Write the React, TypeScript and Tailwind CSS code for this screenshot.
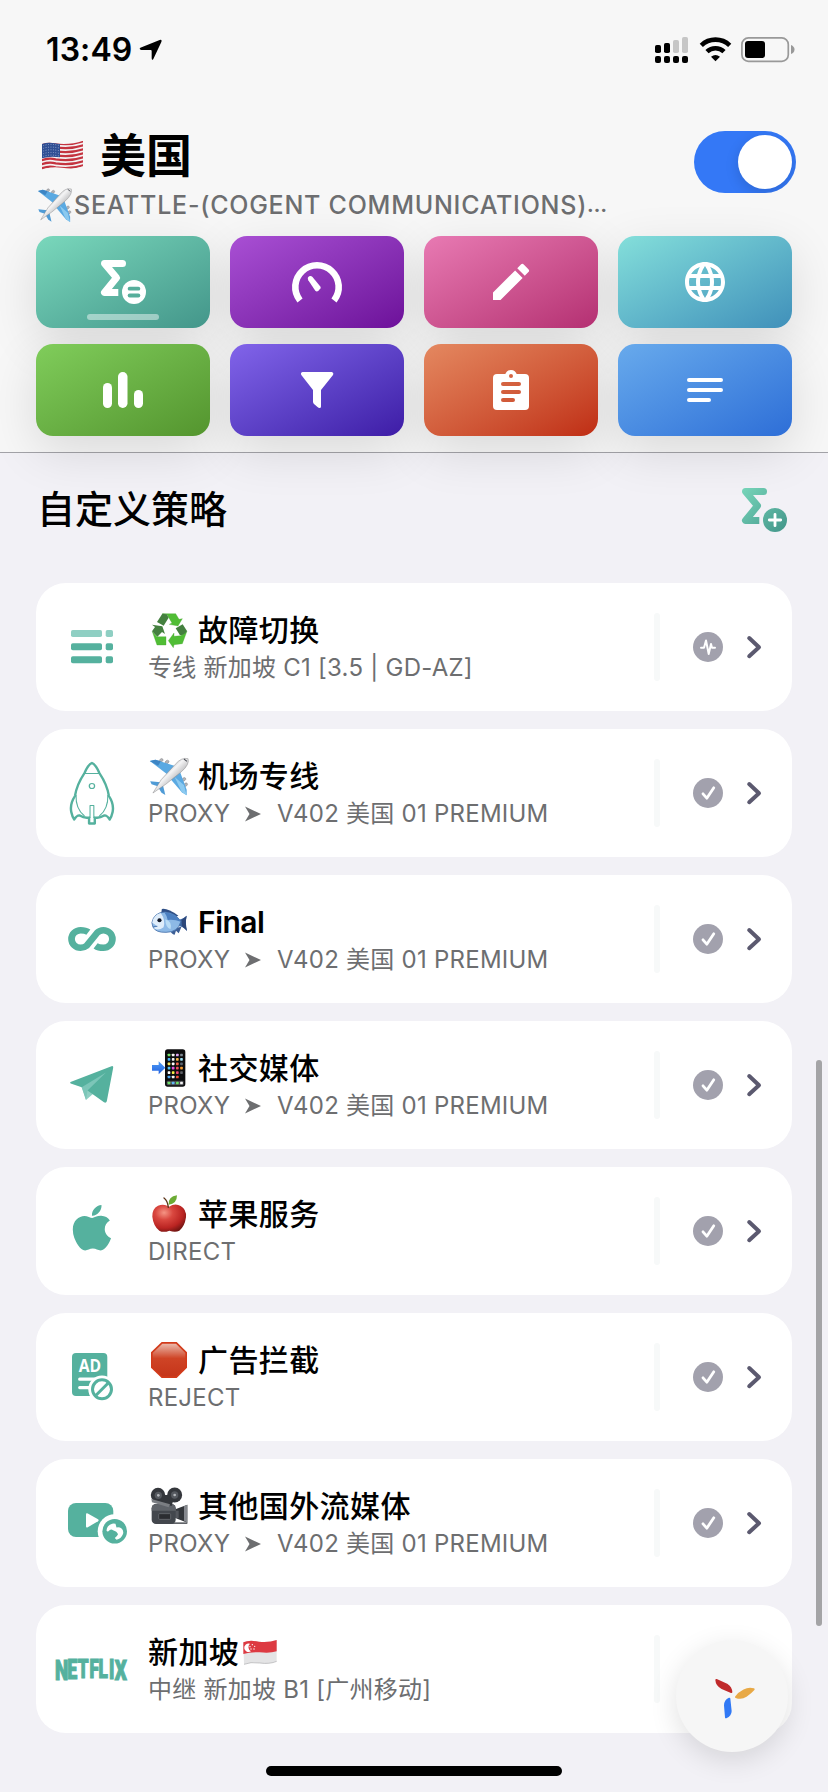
import type { ReactNode } from "react";
import { MdEdit, MdLanguage } from "react-icons/md";
import { FaApple } from "react-icons/fa";

const GREEN = "#55b19e";

/* ---------- status bar ---------- */

function StatusBar() {
  return (
    <div className="flex h-[98px] items-start justify-between pl-[46px] pr-[33px] pt-[30px]">
      <div className="flex h-[39px] items-center">
        <span className="w-[93px] whitespace-nowrap text-[32px] font-semibold leading-none tracking-[0.1px] text-black">13:49</span>
        <svg className="h-[24px] w-[24px]" viewBox="414 114 72 72">
          <path d="M418 143 L476 120 Q484 118 481 126 L457 177 Q453 183 452 175 V153 Q452 150 449 150 L421 150 Q413 147 418 143Z" fill="#000" />
        </svg>
      </div>
      <svg className="h-[39px] w-[141px]" viewBox="654 30 141 39">
        <rect x="655" y="45" width="6" height="8" rx="1.8" />
        <rect x="664" y="43" width="6" height="10" rx="1.8" />
        <rect x="673" y="40" width="6" height="13" rx="1.8" fill="#c6c6c6" />
        <rect x="682" y="37" width="6" height="16" rx="1.8" fill="#c6c6c6" />
        <rect x="655" y="56" width="6" height="7" rx="2" />
        <rect x="664" y="56" width="6" height="7" rx="2" />
        <rect x="673" y="56" width="6" height="7" rx="2" />
        <rect x="682" y="56" width="6" height="7" rx="2" />
        <g fill="none" stroke="#000" strokeWidth="4.6">
          <path d="M701.3 45.3 A20.5 20.5 0 0 1 729.7 45.3" />
          <path d="M707 51.6 A12.3 12.3 0 0 1 724 51.6" />
        </g>
        <path d="M711 56.8 Q715.5 53 720 56.8 L715.5 61.3Z" />
        <rect x="741.9" y="37.9" width="46.4" height="23.4" rx="6.5" fill="none" stroke="#999" strokeWidth="1.7" />
        <rect x="745" y="41" width="20" height="17" rx="3" />
        <path d="M791 45 Q794.5 46.5 794.5 49.5 Q794.5 52.5 791 54Z" fill="#999" />
      </svg>
    </div>
  );
}

/* ---------- emoji drawings (50x40 slots) ---------- */

function Emoji({ box, children }: { box: string; children: ReactNode }) {
  return (
    <svg className="h-[40px] w-[50px] shrink-0" viewBox={box} preserveAspectRatio="none">
      {children}
    </svg>
  );
}

function PlaneShape() {
  return (
    <g>
      <defs>
        <linearGradient id="fus" x1="0" y1="0" x2="1" y2="1">
          <stop offset="0.25" stopColor="#9a9a9c" />
          <stop offset="0.45" stopColor="#f4f4f5" />
          <stop offset="0.8" stopColor="#8b8b8e" />
        </linearGradient>
      </defs>
      <g fill="#b3b4b8" stroke="#85868b" strokeWidth="1.5">
        <ellipse cx="381" cy="118" rx="6" ry="4.5" transform="rotate(-40 381 118)" />
        <ellipse cx="398" cy="123" rx="6" ry="4.5" transform="rotate(-40 398 123)" />
        <ellipse cx="447" cy="175" rx="6" ry="4.5" transform="rotate(-40 447 175)" />
        <ellipse cx="452" cy="191" rx="6" ry="4.5" transform="rotate(-40 452 191)" />
      </g>
      <path d="M348 120 L364 116 L430 138 L404 164Z" fill="#5aa9e2" />
      <path d="M348 120 L364 116 L380 121 L372 134Z" fill="#3d85c4" />
      <path d="M434 148 L455 206 V223 L441 214 L406 172Z" fill="#5aa9e2" />
      <path d="M420 168 L447 192 L455 223 L441 214Z" fill="#8ccaf0" />
      <path d="M349 181 L379 184 L371 196 L353 190Z" fill="#4f9bd6" />
      <path d="M386 192 L393 222 L382 215 L373 200Z" fill="#4f9bd6" />
      <path d="M459 113 Q440 108 422 130 L381 176 L357 216 L394 190 L440 152 Q464 130 459 113Z" fill="url(#fus)" stroke="#88888b" strokeWidth="1.5" />
      <path d="M447 114 L456 121" stroke="#4a4d55" strokeWidth="3" />
    </g>
  );
}

function Recycle() {
  return (
    <Emoji box="384 450 150 120">
      <g fill="#50bd35" strokeLinejoin="round" strokeWidth="1" stroke="#46a832">
        <path d="M427 461 H467 L477 478 L487 476 L474 498 L448 493 L456 489 L441 464Z" />
        <path d="M462 519 V529 L482 527 L501 513 L487 551 L462 554 L460 563 L445 542Z" />
        <path d="M397 515 L411 530 H438 V555 H411Z" />
      </g>
      <g fill="#44803f">
        <path d="M427 461 L440 463 L446 473 L431 497 L411 486Z" />
        <path d="M467 505 L488 493 L501 513 Q494 525 480 526Z" />
        <path d="M396 494 L427 499 L435 522 L426 516 L412 530 L396 514 L405 501Z" />
      </g>
    </Emoji>
  );
}

function Fish() {
  return (
    <Emoji box="342.7 182 145.2 120">
      <g transform="translate(0 -364)">
        <path d="M383 567 Q398 563 431 587 L400 600 L380 585Z" fill="#2f4f86" />
        <path d="M405 628 Q412 645 420 644 L424 632 L432 640 L440 620Z" fill="#3d5f96" />
        <path d="M424 600 Q440 600 455 587 Q450 610 456 633 Q444 618 428 618Z" fill="#3f6ba8" />
        <path d="M440 600 L455 587 Q450 610 456 633 L441 618Z" fill="#2c477a" />
        <path d="M354 608 Q360 577 392 576 Q425 580 438 605 Q430 637 395 637 Q365 638 357 621Z" fill="#8db9e6" stroke="#4671ab" strokeWidth="2.5" />
        <path d="M390 577 Q425 580 438 605 Q420 598 400 600 Q398 588 390 577Z" fill="#4b7fc0" />
        <path d="M355 608 Q358 585 380 579 Q394 600 388 622 Q372 634 359 624 L370 619Z" fill="#dfedfa" />
        <path d="M393 598 Q414 605 408 628 Q393 622 393 598Z" fill="#b9dcf5" />
        <circle cx="376" cy="601" r="6" fill="#101828" />
        <path d="M358 620 L370 619" stroke="#4671ab" strokeWidth="2.5" />
      </g>
    </Emoji>
  );
}

const APP_COLORS = [
  "#79e36b", "#f4f4f4", "#e0a5f5", "#7d8790", "#49b3f5", "#f2f2f2", "#f5b64b", "#9be0f5",
  "#f7e75b", "#ffffff", "#f2634b", "#5b6470", "#52c3f7", "#e64fe0", "#ef4f5f", "#f59a2f",
  "#ffffff", "#f5ee45", "#ee4b7a", "#5d5f66", "#4ea9f5", "#f4f4f4", "#f0503c", "#111111",
];

function Phone() {
  return (
    <Emoji box="354 38 150 120">
      <defs>
        <linearGradient id="arr" x1="0" y1="0" x2="0" y2="1">
          <stop stopColor="#4f9df5" />
          <stop offset="1" stopColor="#2160e0" />
        </linearGradient>
      </defs>
      <g transform="translate(0 -76)">
        <rect x="405" y="118" width="61" height="112" rx="8" fill="#0c0c0e" />
        <path d="M366 165 H386 V154 L406 173.5 L386 193 V182 H366Z" fill="url(#arr)" />
        {APP_COLORS.map((c, i) => (
          <rect key={i} x={413 + (i % 4) * 12.5} y={131 + Math.floor(i / 4) * 13.2} width="8" height="8" rx="2" fill={c} />
        ))}
        <rect x="410" y="212" width="51" height="14" rx="3" fill="#4a4b50" />
        {["#6fe06a", "#5fb9f5", "#6ade66", "#f4f4f4"].map((c, i) => (
          <rect key={c} x={413 + i * 12.5} y="215" width="8" height="8" rx="2" fill={c} />
        ))}
      </g>
    </Emoji>
  );
}

function AppleFruit() {
  return (
    <Emoji box="354 552 150 120">
      <defs>
        <radialGradient id="red" cx="0.35" cy="0.3" r="0.75">
          <stop stopColor="#f59484" />
          <stop offset="0.35" stopColor="#d9473f" />
          <stop offset="0.75" stopColor="#ba2422" />
          <stop offset="1" stopColor="#751613" />
        </radialGradient>
      </defs>
      <path d="M417 590 Q436 578 452 588 Q470 598 468 622 Q464 650 448 662 Q436 668 418 662 Q400 669 388 662 Q370 648 367 620 Q366 596 384 587 Q402 580 417 590Z" fill="url(#red)" />
      <path d="M402 564 Q413 572 415 592" fill="none" stroke="#5a3216" strokeWidth="4" strokeLinecap="round" />
      <path d="M416 584 Q414 560 441 556 Q441 582 416 584Z" fill="#6cab34" />
    </Emoji>
  );
}

function StopSign() {
  return (
    <Emoji box="354 120 150 120">
      <defs>
        <linearGradient id="stop" x1="0" y1="0" x2="0" y2="1">
          <stop stopColor="#eab9ab" />
          <stop offset="0.45" stopColor="#cf4426" />
          <stop offset="1" stopColor="#c5351a" />
        </linearGradient>
      </defs>
      <path d="M395 126 H440 L471 157 V203 L440 234 H395 L363 203 V157Z" fill="#d23a1a" />
      <path d="M397 131 H438 L466 159 V201 L438 229 H397 L368 201 V159Z" fill="url(#stop)" />
    </Emoji>
  );
}

function Camera() {
  return (
    <Emoji box="354 558 150 120">
      <path d="M436 628 L472 614 V668 L436 654Z" fill="#33363b" />
      <path d="M462 619 L472 614 V668 L462 662Z" fill="#85888e" />
      <path d="M432 632 h14 v22 h-14Z" fill="#54575d" />
      <rect x="424" y="667" width="48" height="5" fill="#606368" />
      <rect x="365" y="612" width="72" height="60" rx="13" fill="#43474d" />
      <path d="M365 626 Q365 612 380 612 H425 Q437 613 437 626 V632 H365Z" fill="#5f6369" />
      <rect x="386" y="641" width="36" height="17" rx="3" fill="#2b2d31" stroke="#74777c" strokeWidth="2" />
      <path d="M384 585 L434 585 L425 618 L380 606Z" fill="#34373c" />
      <circle cx="384" cy="585" r="21.5" fill="#34373c" />
      <circle cx="434" cy="585" r="22.5" fill="#34373c" />
      <path d="M364 597 L420 613 L416 622 L366 607Z" fill="#7b7e83" />
      <circle cx="385" cy="586" r="11" fill="#565a60" />
      <circle cx="434" cy="585" r="11" fill="#565a60" />
      <circle cx="385" cy="586" r="4" fill="#b4b7bb" />
      <circle cx="434" cy="585" r="4" fill="#b4b7bb" />
    </Emoji>
  );
}

function SingaporeFlag() {
  return (
    <Emoji box="630 126 150 120">
      <g transform="translate(0 -87)">
        <path d="M643 244 Q660 236 690 242 Q720 245 743 237 V301 Q722 310 692 306 Q664 302 645 310Z" fill="#e4e4e5" />
        <path d="M643 244 Q660 236 690 242 Q720 245 743 237 V271 Q722 278 692 274 Q664 272 643 279Z" fill="#dd3a42" />
        <path d="M645 310 Q664 302 692 306 Q722 310 743 301" fill="none" stroke="#a9a9ac" strokeWidth="2" />
        <path d="M663 248 A13 13 0 1 0 666 271 A14 14 0 0 1 663 248Z" fill="#fff" />
        {[[670, 251], [677, 256], [675, 264], [666, 264], [663, 257]].map(([x, y]) => (
          <circle key={x} cx={x} cy={y} r="2" fill="#fff" />
        ))}
      </g>
    </Emoji>
  );
}

function UsFlag() {
  return (
    <svg className="h-[36px] w-[62px] shrink-0" viewBox="114 408 186 108">
      <defs>
        <clipPath id="us">
          <path d="M126 429 Q145 422 165 427 Q210 433 249 419 V496 Q225 506 185 500 Q150 495 126 507Z" />
        </clipPath>
      </defs>
      <g clipPath="url(#us)">
        <rect x="120" y="410" width="135" height="100" fill="#f4f2f3" />
        {[0, 1, 2, 3, 4, 5, 6].map((i) => (
          <path key={i} d={`M122 ${430 + i * 12.2} Q145 ${421 + i * 12} 167 ${427 + i * 12} Q212 ${434 + i * 12} 252 ${420 + i * 12}`} fill="none" stroke="#c4333f" strokeWidth="6.5" />
        ))}
        <path d="M126 427 Q145 420 165 426 L180 428 V469 Q150 464 126 472Z" fill="#2f4f94" />
        {[0, 1, 2, 3, 4].map((r) => (
          <path key={r} d={`M130 ${434 + r * 8} Q150 ${427 + r * 8} 177 ${433 + r * 8}`} fill="none" stroke="#bcc8e4" strokeWidth="2.4" strokeDasharray="2.4 5" />
        ))}
      </g>
    </svg>
  );
}

/* ---------- header tiles ---------- */

function TileIcon({ children }: { children: ReactNode }) {
  return (
    <svg className="h-[92px] w-[174px]" viewBox="0 0 174 92" fill="#fff">
      {children}
    </svg>
  );
}

function Sigma({ stroke }: { stroke: string }) {
  return (
    <g fill="none" stroke={stroke} strokeWidth="7" strokeLinejoin="round">
      <path d="M86.5 27.5 H68.5 L80.5 41.8 L68.5 56.5 H82.3" />
      <path d="M80 27.5 H86.5" strokeLinecap="round" />
    </g>
  );
}

const tiles: { bg: string; icon: ReactNode }[] = [
  {
    bg: "from-[#7ad8bc] to-[#43968a]",
    icon: (
      <TileIcon>
        <Sigma stroke="#fff" />
        <circle cx="98" cy="56" r="12" />
        <rect x="91.7" y="50.8" width="12.6" height="3.8" rx="1.9" fill="#56ae9b" />
        <rect x="91.7" y="57.6" width="12.6" height="3.8" rx="1.9" fill="#56ae9b" />
        <rect x="51" y="78" width="72" height="6" rx="3" fillOpacity="0.45" />
      </TileIcon>
    ),
  },
  {
    bg: "from-[#a94fd4] to-[#6d0f9a]",
    icon: (
      <TileIcon>
        <path d="M70 64.5 A21.7 21.7 0 1 1 104 64.5" fill="none" stroke="#fff" strokeWidth="6.6" />
        <path d="M78.3 44.2 Q76.8 41 79.8 40 Q81.4 39.7 82.5 41 L90.3 50.5 Q91 51.5 90.4 52.6 L88.2 55 Q86.6 56 85.3 54.7Z" />
      </TileIcon>
    ),
  },
  { bg: "from-[#e87ab3] to-[#b42f72]", icon: <MdEdit size={48} color="#fff" /> },
  { bg: "from-[#84dfda] to-[#4090ba]", icon: <MdLanguage size={48} color="#fff" /> },
  {
    bg: "from-[#80cd5b] to-[#54952e]",
    icon: (
      <TileIcon>
        <rect x="67" y="39" width="9" height="25" rx="4.5" />
        <rect x="82" y="28" width="9.5" height="36" rx="4.7" />
        <rect x="98" y="46" width="9" height="18" rx="4.5" />
      </TileIcon>
    ),
  },
  {
    bg: "from-[#8264ea] to-[#3e1ba6]",
    icon: (
      <TileIcon>
        <path d="M72.5 28 H101.7 Q104 28.5 103 31 L91 46 V62.5 Q91 64 89.6 64 Q88.6 64 87.5 63 L84 60 Q83 59 83 57.5 V46 L71.3 31 Q70.2 28.6 72.5 28Z" />
      </TileIcon>
    ),
  },
  {
    bg: "from-[#e48860] to-[#bf2c13]",
    icon: (
      <TileIcon>
        <defs>
          <mask id="clip">
            <rect x="69" y="30" width="36" height="36" rx="4" fill="#fff" />
            <path d="M81 31 Q82.5 26 87 26 Q91.5 26 93 31Z" fill="#fff" />
            <g fill="#000">
              <circle cx="87" cy="32" r="2" />
              <rect x="77" y="38" width="20" height="4" rx="2" />
              <rect x="77" y="46" width="20" height="4" rx="2" />
              <rect x="77" y="54" width="14" height="4" rx="2" />
            </g>
          </mask>
        </defs>
        <rect x="60" y="20" width="54" height="52" mask="url(#clip)" />
      </TileIcon>
    ),
  },
  {
    bg: "from-[#68aaec] to-[#2e6ed7]",
    icon: (
      <TileIcon>
        <rect x="69" y="34" width="36" height="4" rx="2" />
        <rect x="69" y="44" width="36" height="4" rx="2" />
        <rect x="69" y="54" width="24" height="4" rx="2" />
      </TileIcon>
    ),
  },
];

/* ---------- row icons (112x128 slots) ---------- */

const listIcon = (
  <g fill={GREEN}>
    <rect x="35" y="47" width="31" height="7" rx="1.8" fill="#8fcfc3" />
    <rect x="69.7" y="47" width="7.3" height="7" rx="1.8" fill="#8fcfc3" />
    <rect x="35" y="60.2" width="31" height="7" rx="1.8" />
    <rect x="69.7" y="60.2" width="7.3" height="7" rx="1.8" />
    <rect x="35" y="73.3" width="31" height="7" rx="1.8" />
    <rect x="69.7" y="73.3" width="7.3" height="7" rx="1.8" />
  </g>
);

const rocketIcon = (
  <g fill="none" stroke={GREEN} strokeWidth="2.3" strokeLinejoin="round" transform="translate(-1.3 0) scale(1.06 1)">
    <path d="M54 34 Q57.5 35.5 61 44 Q68.5 56 70 67 Q75 75 73.5 83 Q72.5 88 70.7 90.5 Q68 86 65.5 86.5 Q61 89.5 56.7 88.5 V94.5 H51.3 V88.5 Q47 89.5 42.5 86.5 Q40 86 37.3 90.5 Q35.5 88 34.5 83 Q33 75 38 67 Q39.5 56 47 44 Q50.5 35.5 54 34Z" />
    <circle cx="54" cy="57" r="2.5" strokeWidth="1.2" />
    <path d="M47 44.5 H61 M39 66 Q38.5 80 47 87 M69 66 Q69.5 80 61 87 M52.2 89 V76.5 H55.8 V89" strokeWidth="1" />
  </g>
);

const infinityIcon = (
  <path
    transform="translate(0.2 0) scale(1.033 1)"
    d="M50.5 57.2 Q47.8 55.2 43 55.2 A8.8 8.8 0 0 0 43 72.8 Q46.5 72.8 49 70.6 L59 57.8 Q61.5 55.2 65 55.2 A8.8 8.8 0 0 1 65 72.8 Q60.2 72.8 57.5 70.8"
    fill="none"
    stroke={GREEN}
    strokeWidth="6.5"
  />
);

const telegramIcon = (
  <g fill={GREEN}>
    <path d="M45.7 66 L50 79 L57.5 72.5 L51 66Z" fill="#8fcfc3" />
    <path d="M34.5 61 L75.5 45.2 Q77.5 44.6 77.2 46.8 L70.8 80.2 Q70 82.5 68 81.2 L51.5 69.5 L45.7 66.3 L34.7 62.5 Q33.6 61.8 34.5 61Z" />
    <path d="M45.7 66.3 L70 51.5 L51.5 69.5 L50 79Z" fill="#7cc6b8" />
  </g>
);

const appleIcon = <FaApple x={29.9} y={34.7} size={52} color={GREEN} />;

const adIcon = (
  <g fill={GREEN}>
    <rect x="36" y="40" width="35.3" height="43" rx="4" />
    <text x="42.8" y="59.3" fill="#fff" fontSize="17" fontWeight="700" textLength="22.4" lengthAdjust="spacingAndGlyphs" fontFamily="Open Sans, sans-serif">AD</text>
    <path d="M43.7 66.2 H60 M43.7 74.6 H54" stroke="#fff" strokeWidth="3.2" strokeLinecap="round" />
    <circle cx="66" cy="76.3" r="13.7" fill="#fff" />
    <circle cx="66" cy="76.3" r="9.5" fill="none" stroke={GREEN} strokeWidth="3" />
    <path d="M60 82.3 L72 70.3" stroke={GREEN} strokeWidth="3" />
  </g>
);

const videoIcon = (
  <g fill={GREEN}>
    <rect x="32" y="44" width="45.3" height="34" rx="8" />
    <path d="M50 55.5 Q50 53.7 51.8 54.5 L62 60.3 Q63.3 61.3 62 62.3 L51.8 68.2 Q50 69 50 67.2Z" fill="#fff" />
    <circle cx="78.7" cy="72.3" r="17" fill="#fff" />
    <circle cx="78.7" cy="72.3" r="12.3" />
    <path d="M70.5 71.5 Q71 66.5 75 65.2 Q77 63.8 79.5 64.8 L80.5 68.5 Q83 67.5 85.3 69.3 Q88 71.5 87 75 Q85 80 80.5 80.7 L78.8 79 Q81.5 77 82 75.3 Q81 72.5 77 71.3 Q75.5 70 73.5 71.2 Q71.5 73.5 70.5 71.5Z" fill="#fff" />
  </g>
);

/* letter, left edge, cap height: caps hang from one line and shorten toward the middle */
const NETFLIX: [string, number, number][] = [
  ["N", 19, 20.3],
  ["E", 31.2, 19.2],
  ["T", 41.7, 18.5],
  ["F", 53.4, 18.2],
  ["L", 62.4, 18.5],
  ["I", 73, 19.2],
  ["X", 78.7, 20.3],
];

const netflixIcon = (
  <text transform="scale(0.66 1)" fill={GREEN} stroke={GREEN} strokeWidth="1.2" fontWeight="900" fontFamily="Roboto, sans-serif">
    {NETFLIX.map(([ch, x, cap]) => (
      <tspan key={ch} x={x / 0.66} y={54.7 + cap} fontSize={cap / 0.711}>
        {ch}
      </tspan>
    ))}
  </text>
);

interface Policy {
  title: string;
  detail: string;
  icon: ReactNode;
  before?: ReactNode;
  after?: ReactNode;
  badge?: "pulse" | "check";
}

const V402 = "V402";

const policies: Policy[] = [
  { title: "故障切换", detail: "专线 新加坡 C1 [3.5 | GD-AZ]", icon: listIcon, before: <Recycle />, badge: "pulse" },
  { title: "机场专线", detail: V402, icon: rocketIcon, before: <Emoji box="342.7 105 145.2 120"><PlaneShape /></Emoji>, badge: "check" },
  { title: "Final", detail: V402, icon: infinityIcon, before: <Fish />, badge: "check" },
  { title: "社交媒体", detail: V402, icon: telegramIcon, before: <Phone />, badge: "check" },
  { title: "苹果服务", detail: "DIRECT", icon: appleIcon, before: <AppleFruit />, badge: "check" },
  { title: "广告拦截", detail: "REJECT", icon: adIcon, before: <StopSign />, badge: "check" },
  { title: "其他国外流媒体", detail: V402, icon: videoIcon, before: <Camera />, badge: "check" },
  { title: "新加坡", detail: "中继 新加坡 B1 [广州移动]", icon: netflixIcon, after: <SingaporeFlag /> },
];

function Detail({ text }: { text: string }) {
  if (text !== V402) return <span>{text}</span>;
  return (
    <>
      <span className="w-[97px]">PROXY</span>
      <svg className="h-[16px] w-[16px]" viewBox="0 0 16 16">
        <path d="M0 0.5 L16 8 L0 15.5 L4.5 8Z" fill="#6d6e70" />
      </svg>
      <span className="ml-[16px]">V402 美国 01 PREMIUM</span>
    </>
  );
}

function PolicyCard({ p }: { p: Policy }) {
  return (
    <div className="flex h-[128px] items-center rounded-[30px] bg-white">
      <svg className="h-[128px] w-[112px] shrink-0" viewBox="0 0 112 128">{p.icon}</svg>
      <div className="flex w-[506px] flex-col">
        <div className={`flex h-[40px] items-center whitespace-nowrap text-[30px] leading-none text-black ${p.title === "Final" ? "font-semibold tracking-[-0.5px]" : "font-medium tracking-[0.4px]"}`}>
          {p.before}
          <span>{p.title}</span>
          {p.after}
        </div>
        <div className="flex h-[34px] items-center whitespace-nowrap pt-[2px] text-[24px] leading-none tracking-[0.25px] text-[#6d6e70]">
          <Detail text={p.detail} />
        </div>
      </div>
      <div className="h-[68px] w-[6px] rounded-full bg-[#f7f9f9]" />
      {p.badge && (
        <svg className="ml-[32px] h-[32px] w-[80px]" viewBox="0 0 80 32">
          <circle cx="16" cy="16" r="15" fill="#a2a1ad" />
          {p.badge === "check" ? (
            <path d="M11 16.8 L14.8 21.2 L21.8 10.8" fill="none" stroke="#fff" strokeWidth="2.8" strokeLinecap="round" strokeLinejoin="round" />
          ) : (
            <path d="M9 16.7 H12 L14 9.5 L16.7 23 L19 13 L20 16.7 H23" fill="none" stroke="#fff" strokeWidth="2" strokeLinecap="round" strokeLinejoin="round" />
          )}
          <path d="M57.2 7 L67 16.2 L57.2 25.2" fill="none" stroke="#5b596f" strokeWidth="4" strokeLinecap="round" strokeLinejoin="round" />
        </svg>
      )}
    </div>
  );
}

export default function App() {
  return (
    <div className="relative h-[1792px] w-[828px] overflow-hidden bg-[#f2f1f6] font-[Inter,'Noto_Sans_CJK_SC',sans-serif]">
      <header className="relative z-10 h-[453px] border-b border-[#a3a3a8] bg-[#f7f7f7]">
        <StatusBar />
        <div className="flex h-[138px] justify-between pl-[38px] pr-[32px] pt-[27px]">
          <div className="flex flex-col">
            <div className="flex h-[60px] items-center text-[46px] font-bold leading-none text-black">
              <UsFlag />
              <span>美国</span>
            </div>
            <div className="flex h-[40px] items-center whitespace-nowrap text-[25px] font-medium leading-none tracking-[0.75px] text-[#6d6e70]">
              <svg className="h-[34px] w-[36px] shrink-0" viewBox="348 110 120 113">
                <PlaneShape />
              </svg>
              <span>SEATTLE-(COGENT COMMUNICATIONS)</span>
              <span className="text-[20px] font-bold tracking-normal">…</span>
            </div>
          </div>
          <div className="mt-[6px] flex h-[62px] w-[102px] justify-end overflow-hidden rounded-full bg-[#3478f6] p-[4px]">
            <div className="h-[54px] w-[54px] rounded-full bg-white shadow-[0_4px_14px_rgba(0,0,0,0.14)]" />
          </div>
        </div>
        <div className="grid grid-cols-[repeat(4,174px)] gap-x-[20px] gap-y-[16px] px-[36px]">
          {tiles.map((t, i) => (
            <div key={i} className="h-[92px] rounded-[17px] shadow-[0_15px_50px_rgba(0,0,0,0.12)]">
              <div className={`relative z-10 flex h-[92px] items-center justify-center rounded-[17px] bg-gradient-to-br ${t.bg}`}>{t.icon}</div>
            </div>
          ))}
        </div>
      </header>

      <section className="flex h-[112px] items-center justify-between pl-[37px] pr-[32px]">
        <h2 className="text-[38px] font-medium leading-none text-black">自定义策略</h2>
        <svg className="h-[52px] w-[64px]" viewBox="55 19 64 52">
          <defs>
            <linearGradient id="sig" gradientUnits="userSpaceOnUse" x1="65" y1="24" x2="108" y2="68">
              <stop stopColor="#78d6ba" />
              <stop offset="1" stopColor="#43968a" />
            </linearGradient>
          </defs>
          <Sigma stroke="url(#sig)" />
          <circle cx="98" cy="56" r="12" fill="url(#sig)" />
          <path d="M92.3 56 H103.7 M98 50.3 V61.7" stroke="#fff" strokeWidth="2.8" strokeLinecap="round" />
        </svg>
      </section>

      <main className="flex flex-col gap-[18px] px-[36px] pt-[18px]">
        {policies.map((p) => (
          <PolicyCard key={p.title} p={p} />
        ))}
      </main>

      <div className="absolute left-[816px] top-[1060px] h-[566px] w-[6px] rounded-full bg-[#a4a4a6]" />
      <div className="absolute left-[676px] top-[1640px] flex h-[112px] w-[112px] items-center justify-center rounded-full bg-[#f6f6f6] shadow-[0_8px_28px_rgba(0,0,0,0.12)]">
        <svg className="h-[112px] w-[112px]" viewBox="168 180 336 336">
          <g strokeLinejoin="round" strokeWidth="6">
            <path d="M289 300 L322 315 Q333 322 334 336 L306 324 Q290 316 289 300Z" fill="#c02a2b" stroke="#c02a2b" />
            <path d="M348 351 Q356 339 372 331 Q386 324 401 328 Q392 338 378 348 Q364 357 348 351Z" fill="#e8a946" stroke="#e8a946" />
            <path d="M328 356 Q315 362 315 376 L318 412 Q332 406 332 393Z" fill="#3179f5" stroke="#3179f5" />
          </g>
        </svg>
      </div>
      <div className="absolute left-[266px] top-[1766px] h-[10px] w-[296px] rounded-full bg-black" />
    </div>
  );
}
